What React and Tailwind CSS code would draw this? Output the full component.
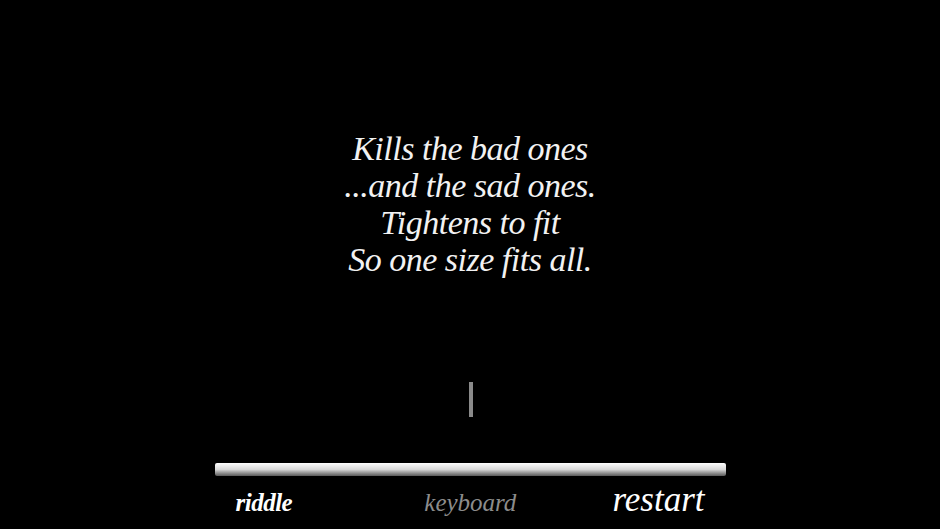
import React from 'react';

const lines = ['Kills the bad ones', '...and the sad ones.', 'Tightens to fit', 'So one size fits all.'];

export default function App() {
  return (
    <div
      className="w-[940px] h-[529px] bg-black flex flex-col items-center overflow-hidden"
      style={{ fontFamily: '"Liberation Serif", "DejaVu Serif", serif' }}
    >
      {/* riddle text */}
      <div className="mt-[130px] flex flex-col items-center italic text-[34px] leading-[37px] text-[#f2f2f2] tracking-[-0.5px]">
        {lines.map((l) => (
          <div key={l}>{l}</div>
        ))}
      </div>

      {/* input cursor */}
      <div className="mt-[104px] ml-[1px] w-[4px] h-[35px] bg-[#8a8a8a]" />

      {/* divider bar */}
      <div className="mt-[46px] w-[511px] h-[13px] rounded-[2px] bg-gradient-to-b from-white via-[#d8d8d8] to-[#5a5a5a]" />

      {/* menu */}
      <div className="w-[511px] px-[21px] flex justify-between items-baseline italic -mt-[2px]">
        <span className="text-[25px] text-white font-bold tracking-[-0.5px]">riddle</span>
        <span className="text-[25px] text-[#8c8c8c] ml-[36px]">keyboard</span>
        <span className="text-[35px] text-white">restart</span>
      </div>
    </div>
  );
}
